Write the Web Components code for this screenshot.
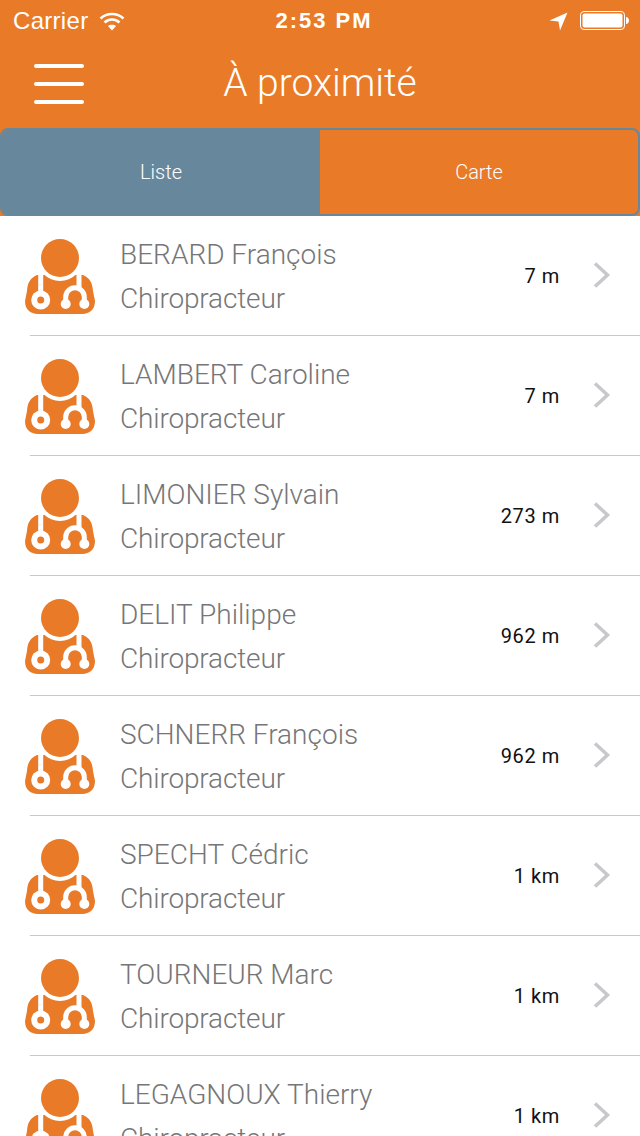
<!DOCTYPE html>
<html lang="fr">
<head>
<meta charset="utf-8">
<title>À proximité</title>
<style>
  html, body { margin: 0; height: 1136px; overflow: hidden; background: #fff; }
  body { font-family: "Liberation Sans", Arial, sans-serif; }
</style>
</head>
<body>
<app-header title="À proximité"></app-header>
<segment-bar></segment-bar>
<doctor-list></doctor-list>

<template id="doctor-icon">
  <svg width="70" height="76" viewBox="0 0 70 76">
    <path fill="#e97a28" d="M12 36 C5 39 2.500 44 2 52 L0 62 C0 70 5 75 13 75 L57 75 C65 75 70 70 70 62 L68 52 C67.500 44 65 39 58 36 Z"/>
    <circle cx="35" cy="19" r="23" fill="#fff"/>
    <circle cx="35" cy="19" r="19" fill="#e97a28"/>
    <g fill="none" stroke="#fff" stroke-width="5">
      <path d="M15.700 32 V54"/>
      <path d="M54 32 V50"/>
      <path d="M40.700 65 V58 A9.300 9.300 0 0 1 59.300 58 V65"/>
    </g>
    <circle cx="15.700" cy="61" r="9.500" fill="#fff"/>
    <circle cx="15.700" cy="61" r="3.500" fill="#e97a28"/>
    <circle cx="40.700" cy="65" r="5" fill="#fff"/>
    <circle cx="59.300" cy="65" r="5" fill="#fff"/>
  </svg>
</template>

<script>
class AppHeader extends HTMLElement {
  constructor () {
    super()
    this.shadow = this.attachShadow({ mode: 'open' })
  }

  connectedCallback () {
    this.shadow.innerHTML =
      /* html */`
      <style>
        :host { display: block; background: #e97a28; color: #fff; height: 128px; font-family: "Liberation Sans", Arial, sans-serif; }
        .status { box-sizing: border-box; height: 40px; display: grid; grid-template-columns: 1fr auto 1fr; align-items: center; padding: 2px 11px 0 13px; font-size: 24px; }
        .left { display: flex; align-items: center; gap: 11px; letter-spacing: 0.3px; }
        .time { font-weight: 700; font-size: 22px; letter-spacing: 2px; padding-left: 6px; }
        .right { display: flex; justify-content: flex-end; align-items: center; gap: 12px; }
        .nav { height: 88px; display: flex; align-items: center; position: relative; }
        .burger { margin-left: 34px; width: 50px; display: flex; flex-direction: column; gap: 14px; }
        .burger span { display: block; height: 4px; border-radius: 2px; background: #fff; }
        h1 { position: absolute; left: 0; right: 0; top: 19px; margin: 0; text-align: center; font-family: Roboto, "Liberation Sans", sans-serif; font-weight: 300; font-size: 39px; line-height: 48px; }
      </style>
      <div class="status">
        <div class="left">
          <span>Carrier</span>
          <svg width="26" height="19" viewBox="0 0 26 19" fill="none" stroke="#fff" stroke-width="2.6">
            <path d="M1.500 6.500 C8 0.500 18 0.500 24.500 6.500"/>
            <path d="M5.500 10.500 C10 6.500 16 6.500 20.500 10.500"/>
            <path d="M13 18.500 L9 14 C11 12.300 15 12.300 17 14 Z" fill="#fff" stroke="none"/>
          </svg>
        </div>
        <span class="time">2:53 PM</span>
        <div class="right">
          <svg width="19" height="19" viewBox="0 0 19 19"><path fill="#fff" d="M18.500 0.500 L0.500 8.500 L9.500 9.500 L11 18.500 Z"/></svg>
          <svg width="49" height="20" viewBox="0 0 49 20">
            <rect x="0.500" y="0.500" width="44" height="18" rx="3.500" fill="none" stroke="#fff"/>
            <rect x="2.500" y="2.500" width="40" height="14" rx="2" fill="#fff"/>
            <path fill="#fff" d="M46 6 C48 6 49 8 49 9.500 C49 11 48 13 46 13 Z"/>
          </svg>
        </div>
      </div>
      <div class="nav">
        <div class="burger"><span></span><span></span><span></span></div>
        <h1>${this.getAttribute('title')}</h1>
      </div>
      `
  }
}

class SegmentBar extends HTMLElement {
  constructor () {
    super()
    this.shadow = this.attachShadow({ mode: 'open' })
  }

  connectedCallback () {
    this.shadow.innerHTML =
      /* html */`
      <style>
        :host { display: block; height: 88px; background: #e97a28; font-family: Roboto, "Liberation Sans", sans-serif; }
        .box { box-sizing: border-box; height: 88px; display: grid; grid-template-columns: 1fr 1fr; border: 2px solid #67889c; border-radius: 8px; overflow: hidden; color: #fff; font-size: 20px; font-weight: 300; }
        .seg { display: flex; align-items: center; justify-content: center; }
        .on { background: #67889c; }
      </style>
      <div class="box">
        <div class="seg on">Liste</div>
        <div class="seg">Carte</div>
      </div>
      `
  }
}

class DoctorRow extends HTMLElement {
  constructor () {
    super()
    this.shadow = this.attachShadow({ mode: 'open' })
  }

  connectedCallback () {
    this.shadow.innerHTML =
      /* html */`
      <style>
        :host { display: block; height: 120px; position: relative; font-family: Roboto, "Liberation Sans", sans-serif; }
        .row { box-sizing: border-box; height: 120px; display: flex; align-items: center; padding: 0 29px 0 25px; }
        .icon { width: 70px; height: 76px; margin-top: 2px; flex: none; }
        .text { flex: 1; margin-left: 25px; padding-top: 2px; color: #767678; font-weight: 300; font-size: 28px; line-height: 44px; }
        .job { letter-spacing: -0.15px; }
        .dist { font-size: 20px; color: #111; letter-spacing: 0.6px; margin-right: 33px; }
        svg.chev { flex: none; margin-top: -2px; }
        .line { position: absolute; left: 30px; right: 0; bottom: 0; height: 1px; background: #c8c8c8; }
      </style>
      <div class="row">
        <div class="icon"></div>
        <div class="text"><div class="name">${this.getAttribute('name')}</div><div class="job">Chiropracteur</div></div>
        <div class="dist">${this.getAttribute('distance')}</div>
        <svg class="chev" width="18" height="26" viewBox="0 0 18 26" fill="none" stroke="#c8c8cc" stroke-width="3.5"><path d="M2 1.500 L14.500 13 L2 24.500"/></svg>
      </div>
      <div class="line"></div>
      `
    this.shadow.querySelector('.icon').append(document.getElementById('doctor-icon').content.cloneNode(true))
  }
}

class DoctorList extends HTMLElement {
  constructor () {
    super()
    this.shadow = this.attachShadow({ mode: 'open' })
  }

  connectedCallback () {
    const doctors = [
      ['BERARD François', '7 m'],
      ['LAMBERT Caroline', '7 m'],
      ['LIMONIER Sylvain', '273 m'],
      ['DELIT Philippe', '962 m'],
      ['SCHNERR François', '962 m'],
      ['SPECHT Cédric', '1 km'],
      ['TOURNEUR Marc', '1 km'],
      ['LEGAGNOUX Thierry', '1 km']
    ]
    this.shadow.innerHTML = '<style>:host { display: block; background: #fff; }</style>' +
      doctors.map(d => `<doctor-row name="${d[0]}" distance="${d[1]}"></doctor-row>`).join('')
  }
}

customElements.define('app-header', AppHeader)
customElements.define('segment-bar', SegmentBar)
customElements.define('doctor-row', DoctorRow)
customElements.define('doctor-list', DoctorList)
</script>
</body>
</html>
